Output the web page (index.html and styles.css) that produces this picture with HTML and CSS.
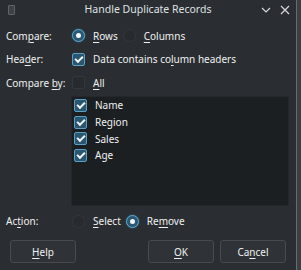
FILE: index.html
```html
<!DOCTYPE html>
<html lang="en">
<head>
  <meta charset="UTF-8">
  <title>Handle Duplicate Records</title>
  <link rel="stylesheet" href="styles.css">
</head>
<body>
  <div class="window">
    <div class="dialog">
      <div class="titlebar">
        <div class="app-icon"></div>
        <div class="title">Handle Duplicate Records</div>
        <div class="title-buttons">
          <svg width="12" height="12" viewBox="0 0 12 12"><path d="M2 4 L6 8 L10 4" fill="none" stroke="#d6d8da" stroke-width="1.2"/></svg>
          <svg width="12" height="12" viewBox="0 0 12 12"><path d="M2 2 L10 10 M10 2 L2 10" fill="none" stroke="#d6d8da" stroke-width="1.2"/></svg>
        </div>
      </div>

      <div class="form">
        <div class="row row-compare">
          <div class="label">Com<u>p</u>are:</div>
          <div class="field">
            <span class="radio checked"></span><span class="opt"><u>R</u>ows</span>
            <span class="radio"></span><span class="opt"><u>C</u>olumns</span>
          </div>
        </div>
        <div class="row row-header">
          <div class="label">Hea<u>d</u>er:</div>
          <div class="field">
            <span class="check checked"></span><span class="opt">Data contains co<u>l</u>umn headers</span>
          </div>
        </div>
        <div class="row row-by">
          <div class="label">Compare <u>b</u>y:</div>
          <div class="field">
            <span class="check"></span><span class="opt"><u>A</u>ll</span>
          </div>
        </div>

        <div class="list">
          <div class="item"><span class="check checked"></span>Name</div>
          <div class="item"><span class="check checked"></span>Region</div>
          <div class="item"><span class="check checked"></span>Sales</div>
          <div class="item"><span class="check checked"></span>Age</div>
        </div>

        <div class="row row-action">
          <div class="label">Ac<u>t</u>ion:</div>
          <div class="field">
            <span class="radio"></span><span class="opt"><u>S</u>elect</span>
            <span class="radio checked"></span><span class="opt">Re<u>m</u>ove</span>
          </div>
        </div>
      </div>

      <div class="buttons">
        <button class="btn"><u>H</u>elp</button>
        <span class="spacer"></span>
        <button class="btn"><u>O</u>K</button>
        <button class="btn">Ca<u>n</u>cel</button>
      </div>
    </div>
    <div class="edge"></div>
  </div>
</body>
</html>
```

FILE: styles.css
```css
body, html {
  margin: 0;
  padding: 0;
  width: 301px;
  height: 270px;
  overflow: hidden;
  background-color: #2a2e32;
  font-family: "Noto Sans", "DejaVu Sans", sans-serif;
  font-size: 10px;
  color: #eff0f1;
}

u {
  text-decoration-thickness: 1px;
  text-underline-offset: 2px;
}

.window {
  display: flex;
  height: 270px;
}

.dialog {
  width: 296px;
  display: flex;
  flex-direction: column;
}

.edge {
  width: 1px;
  background-color: #6a6e72;
  border-right: 4px solid #3b3f43;
}

/* title bar */
.titlebar {
  height: 20px;
  display: flex;
  align-items: center;
  position: relative;
}

.app-icon {
  width: 5px;
  height: 8px;
  margin-left: 8px;
  border: 1px solid #5f6367;
  border-radius: 1px;
  background-color: #3e4246;
}

.title {
  position: absolute;
  left: 0;
  right: 0;
  text-align: center;
  font-size: 10.5px;
  color: #dfe1e3;
  top: 2px;
}

.title-buttons {
  margin-left: auto;
  margin-right: 5px;
  display: flex;
  gap: 7px;
}

/* form */
.form {
  padding-left: 6px;
  padding-top: 4px;
  display: flex;
  flex-direction: column;
}

.row {
  display: flex;
  align-items: center;
}

.row-compare { height: 23px; }
.row-header { height: 24px; }
.row-by { height: 23px; }
.row-action { height: 24px; margin-top: 3px; }

.label {
  width: 66px;
}

.field {
  display: flex;
  align-items: center;
}

.opt {
  margin-left: 8px;
  margin-right: 5px;
}

.radio {
  width: 11px;
  height: 11px;
  border-radius: 50%;
  border: 1px solid #34383c;
  background-color: #272b2f;
  position: relative;
}

.radio.checked {
  border-color: #5fa8cf;
  background-color: #2a5873;
  box-shadow: 0 0 2px rgba(61,174,233,0.5);
}

.radio.checked::after {
  content: "";
  position: absolute;
  left: 3px;
  top: 3px;
  width: 5px;
  height: 5px;
  border-radius: 50%;
  background-color: #f2f6f8;
}

.check {
  width: 11px;
  height: 11px;
  border-radius: 2px;
  border: 1px solid #34383c;
  background-color: #272b2f;
  position: relative;
  flex-shrink: 0;
}

.check.checked {
  border-color: #5b9fc4;
  background-color: #2b566f;
}

.check.checked::after {
  content: "";
  position: absolute;
  left: 2px;
  top: 2px;
  width: 6px;
  height: 3px;
  border-left: 2px solid #f4f7f9;
  border-bottom: 2px solid #f4f7f9;
  transform: rotate(-45deg);
}

.list {
  margin-left: 65px;
  margin-top: 2px;
  width: 216px;
  height: 108px;
  background-color: #1c1f22;
  border: 1px solid #24282b;
}

.item {
  height: 16.7px;
  display: flex;
  align-items: center;
  padding-left: 2px;
}

.item .check {
  margin-right: 8px;
}

/* buttons */
.buttons {
  display: flex;
  padding: 0 10px;
  margin-top: 7px;
  gap: 6px;
}

.spacer {
  flex: 1;
}

.btn {
  width: 66px;
  height: 23px;
  background-color: #2f3337;
  border: 1px solid #474b50;
  border-radius: 3px;
  color: #eff0f1;
  font-family: "Noto Sans", "DejaVu Sans", sans-serif;
  font-size: 10px;
  padding: 0;
}
```
